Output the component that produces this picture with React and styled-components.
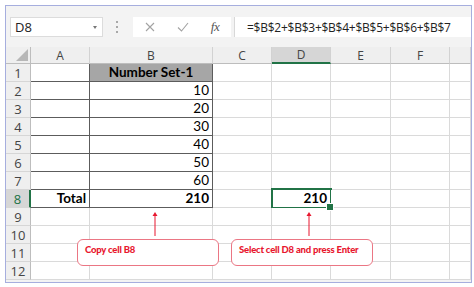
import React from 'react';
import styled, { createGlobalStyle, css } from 'styled-components';

const GlobalStyle = createGlobalStyle`
  html, body { margin: 0; padding: 0; background: #fff; }
  body { font-family: Lato, "Liberation Sans", sans-serif; }
  * { box-sizing: border-box; }
`;

const green = '#217346';
const red = '#e8172f';

const Frame = styled.div`
  margin: 5px 0 0 5px;
  width: 467px;
  height: 278px;
  border: 1px solid #a6aede;
  background: #f3f3f3;
  display: flex;
  flex-direction: column;
  overflow: hidden;
`;

const Toolbar = styled.div`
  height: 41px;
  flex: none;
  display: flex;
  align-items: flex-start;
  padding: 11px 0 0 4px;
`;

const NameBox = styled.div`
  width: 93px;
  height: 20px;
  background: #fff;
  border: 1px solid #dcdcdc;
  display: flex;
  align-items: center;
  justify-content: space-between;
  padding: 0 5px 0 4px;
  font: 13px "Open Sans", sans-serif;
  color: #222;
`;

const Caret = styled.span`
  width: 0;
  height: 0;
  border-left: 2.5px solid transparent;
  border-right: 2.5px solid transparent;
  border-top: 3px solid #777;
`;

const Grip = styled.div`
  margin: 4px 0 0 12px;
  width: 4px;
  height: 12px;
  display: flex;
  flex-direction: column;
  justify-content: space-between;
  align-items: center;
  span { width: 2px; height: 2px; background: #a8a8a8; }
`;

const IconBox = styled.div`
  margin-left: 14px;
  width: 98px;
  height: 20px;
  background: #fff;
  display: grid;
  grid-template-columns: 33px 33px 32px;
  align-items: center;
  justify-items: center;
`;

const Fx = styled.span`
  font: italic 13px "Liberation Serif", serif;
  color: #555;
  letter-spacing: -0.5px;
`;

const FormulaBox = styled.div`
  margin-left: 3px;
  flex: 1;
  height: 20px;
  background: #fff;
  border-left: 1px solid #d8d8d8;
  padding-left: 12px;
  display: flex;
  align-items: center;
  font: 12px "Open Sans", sans-serif;
  letter-spacing: -0.25px;
  color: #222;
`;

const Sheet = styled.div`
  position: relative;
  display: grid;
  grid-template-columns: 25px 59px 123px 59px 59px 60px 59px 1fr;
  grid-template-rows: 17px repeat(12, 18px);
`;

const Corner = styled.div`
  background: #efefef;
  border-right: 1px solid #bdbdbd;
  border-bottom: 1px solid #bdbdbd;
  position: relative;
  &::after {
    content: '';
    position: absolute;
    right: 2px;
    bottom: 2px;
    border-left: 12px solid transparent;
    border-bottom: 12px solid #b7b7b7;
  }
`;

const ColHead = styled.div`
  background: ${p => (p.$active ? '#d6d6d6' : '#efefef')};
  border-right: 1px solid #d2d2d2;
  border-bottom: ${p => (p.$active ? `2px solid ${green}` : '1px solid #bdbdbd')};
  display: flex;
  align-items: center;
  justify-content: center;
  font: 12px "Open Sans", sans-serif;
  color: #444;
`;

const RowHead = styled.div`
  background: ${p => (p.$active ? '#d6d6d6' : '#efefef')};
  border-right: ${p => (p.$active ? `2px solid ${green}` : '1px solid #bdbdbd')};
  border-bottom: 1px solid #d6d6d6;
  display: flex;
  align-items: center;
  justify-content: center;
  font: 13px "Open Sans", sans-serif;
  color: ${p => (p.$active ? green : '#444')};
`;

const Cell = styled.div`
  position: relative;
  background: ${p => (p.$fill ? '#a6a6a6' : '#fff')};
  border-right: 1px solid ${p => (p.$edge ? '#5c5c5c' : '#dadada')};
  border-bottom: 1px solid ${p => (p.$edge ? '#5c5c5c' : '#dadada')};
  padding: 0 3px;
  font-size: 13.5px;
  font-weight: ${p => (p.$bold ? 700 : 400)};
  line-height: 17px;
  text-align: ${p => p.$align || 'left'};
  color: #000;
  white-space: nowrap;
  ${p => p.$selected && css`
    &::after {
      content: '';
      position: absolute;
      top: -2px;
      left: -1px;
      right: -2px;
      bottom: -2px;
      border: 2px solid ${green};
    }
    &::before {
      content: '';
      position: absolute;
      right: -4px;
      bottom: -4px;
      width: 6px;
      height: 6px;
      background: ${green};
      border: 1px solid #fff;
      z-index: 1;
    }
  `}
`;

const Arrow = styled.svg`
  position: absolute;
  left: ${p => p.$x}px;
  top: 164px;
`;

const Callout = styled.div`
  position: absolute;
  left: ${p => p.$x}px;
  top: 192px;
  width: 142px;
  height: 27px;
  background: #fff;
  border: 1px solid #eb7684;
  border-radius: 6px;
  padding: 4px 0 0 7px;
  font: 900 9.5px Lato, sans-serif;
  letter-spacing: -0.2px;
  color: ${red};
`;

const cols = ['A', 'B', 'C', 'D', 'E', 'F', 'G'];

const data = {
  'B1': { text: 'Number Set-1', fill: true, bold: true, align: 'center' },
  'B2': { text: '10', align: 'right' },
  'B3': { text: '20', align: 'right' },
  'B4': { text: '30', align: 'right' },
  'B5': { text: '40', align: 'right' },
  'B6': { text: '50', align: 'right' },
  'B7': { text: '60', align: 'right' },
  'A8': { text: 'Total', bold: true, align: 'right' },
  'B8': { text: '210', bold: true, align: 'right' },
  'D8': { text: '210', bold: true, align: 'right', selected: true },
};

const UpArrow = ({ x }) => (
  <Arrow $x={x} width="8" height="26" viewBox="0 0 8 26">
    <path d="M4 4 V25" stroke={red} strokeWidth="1" />
    <path d="M1.5 5 L4 1 L6.5 5 Z" fill={red} />
  </Arrow>
);

export default function App() {
  const rows = Array.from({ length: 12 }, (_, i) => i + 1);
  return (
    <>
      <GlobalStyle />
      <Frame>
        <Toolbar>
          <NameBox>D8<Caret /></NameBox>
          <Grip><span /><span /><span /></Grip>
          <IconBox>
            <svg width="10" height="10" viewBox="0 0 10 10">
              <path d="M1 1 L9 9 M9 1 L1 9" stroke="#a3a3a3" strokeWidth="1.1" fill="none" />
            </svg>
            <svg width="12" height="10" viewBox="0 0 12 10">
              <path d="M1 5.5 L4.5 9 L11 1" stroke="#a3a3a3" strokeWidth="1.1" fill="none" />
            </svg>
            <Fx>fx</Fx>
          </IconBox>
          <FormulaBox>=$B$2+$B$3+$B$4+$B$5+$B$6+$B$7</FormulaBox>
        </Toolbar>
        <Sheet>
          <Corner />
          {cols.map(c => (
            <ColHead key={c} $active={c === 'D'}>{c === 'G' ? '' : c}</ColHead>
          ))}
          {rows.map(r => (
            <React.Fragment key={r}>
              <RowHead $active={r === 8}>{r}</RowHead>
              {cols.map(c => {
                const d = data[c + r] || {};
                const edge = (c === 'A' || c === 'B') && r <= 8;
                return (
                  <Cell
                    key={c + r}
                    $edge={edge}
                    $fill={d.fill}
                    $bold={d.bold}
                    $align={d.align}
                    $selected={d.selected}
                  >
                    {d.text}
                  </Cell>
                );
              })}
            </React.Fragment>
          ))}
          <UpArrow x={145} />
          <Callout $x={71}>Copy cell B8</Callout>
          <UpArrow x={299} />
          <Callout $x={225}>Select cell D8 and press Enter</Callout>
        </Sheet>
      </Frame>
    </>
  );
}
